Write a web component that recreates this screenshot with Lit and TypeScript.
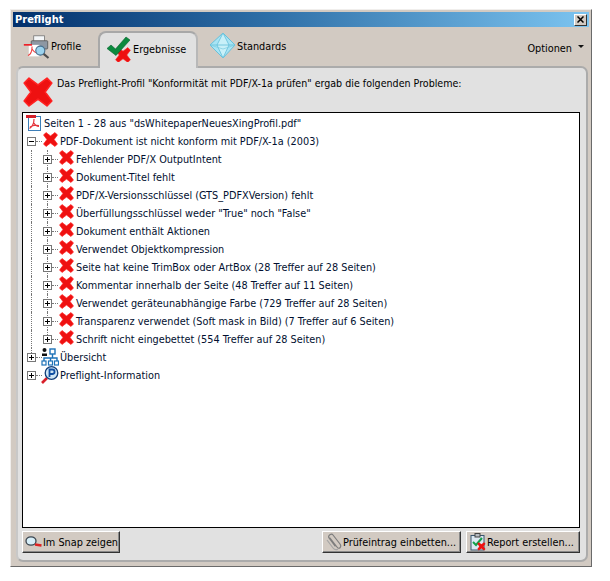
import { LitElement, html, css } from "lit";
import { customElement } from "lit/decorators.js";

const crossPath = "M3.2 0.6 L8 4.2 L12.8 0.6 L15.4 3.2 L11.8 8 L15.4 12.8 L12.8 15.4 L8 11.8 L3.2 15.4 L0.6 12.8 L4.2 8 L0.6 3.2 Z";
const cross = (size = 16) => html`<svg width=${size} height=${size} viewBox="0 0 16 16"><path d=${crossPath} fill="#ee1111" stroke="#f22" stroke-width=".8" stroke-linejoin="round"/></svg>`;

const profileIcon = html`<svg width="28" height="25" viewBox="0 0 34 30">
  <rect x="13" y="2" width="13" height="7" fill="#f4f6f8" stroke="#777"/>
  <rect x="10" y="8" width="20" height="10" rx="1" fill="#8d97a3" stroke="#555"/>
  <rect x="7" y="13" width="13" height="14" fill="#fff"/>
  <rect x="1" y="12" width="10" height="2" fill="#ee1c25"/>
  <path d="M11 15 C11 21 9 25 6 26 M11 18 C13 21 15 23 18 23" fill="none" stroke="#ee3a3a" stroke-width="1.3"/>
  <circle cx="21" cy="20" r="5.5" fill="#9cd3ee" stroke="#47708f" stroke-width="1.4"/>
  <path d="M25 24 L31 29" stroke="#4d4d4d" stroke-width="2.6"/>
</svg>`;

const checkIcon = html`<svg width="27" height="26" viewBox="0 0 27 26">
  <g transform="translate(9 11)"><path d=${crossPath} fill="#ee1111" stroke="#f22" stroke-width=".6"/></g>
  <path d="M1 12.5 L5 9 L9.5 13 L20 1 L24 4 L10 19.5 Z" fill="#0b8a3e" stroke="#05622c" stroke-width=".6"/>
</svg>`;

const diamondIcon = html`<svg width="28" height="28" viewBox="0 0 28 28">
  <path d="M14 1 L26 13 L14 26 L1 13 Z" fill="#a9e4f4" stroke="#66c2dc"/>
  <path d="M14 1 L8 13 L14 26 L20 13 Z M1 13 L26 13" fill="#c8f0f8" stroke="#63bed8" stroke-width=".8"/>
  <path d="M1 13 L14 17 L26 13" fill="none" stroke="#7accdf" stroke-width=".7"/>
</svg>`;

const pdfIcon = html`<svg width="16" height="16" viewBox="0 0 16 16">
  <rect x="2.5" y="1.5" width="12" height="14" fill="#fff" stroke="#3d7fb8"/>
  <rect x="0" y="0" width="10" height="3" fill="#d4202a"/>
  <path d="M8 4 C8 9 6 12 3.5 13.5 M8 8 C9 10 11 11.5 13 11.5 M4 12 C7 10 10 10 13 10.5" fill="none" stroke="#e5343a" stroke-width="1.2"/>
</svg>`;

const orgIcon = html`<svg width="18" height="18" viewBox="0 0 18 18">
  <circle cx="3.5" cy="2" r="2" fill="#111"/><path d="M1 8 V5.5 H6 V8 Z" fill="#111"/>
  <rect x="9" y="1" width="5" height="5" fill="#fff" stroke="#1d72b8" stroke-width="1.4"/>
  <path d="M11.5 6 V10 M3 13 V10 H16 V13 M9.5 10 V13" fill="none" stroke="#1d72b8" stroke-width="1.4"/>
  <rect x="1" y="13" width="4" height="4" fill="#fff" stroke="#1d72b8" stroke-width="1.2"/>
  <rect x="7.5" y="13" width="4" height="4" fill="#fff" stroke="#1d72b8" stroke-width="1.2"/>
  <rect x="13.5" y="13" width="4" height="4" fill="#fff" stroke="#1d72b8" stroke-width="1.2"/>
</svg>`;

const infoIcon = html`<svg width="18" height="18" viewBox="0 0 18 18">
  <path d="M1 17 L6 12" stroke="#d8202a" stroke-width="2.6"/>
  <circle cx="10.5" cy="7" r="6.3" fill="#cfe6f5" stroke="#123f7a" stroke-width="1.3"/>
  <path d="M8.5 11 V3.5 H11.3 A2.2 2.2 0 0 1 11.3 8 H8.5" fill="none" stroke="#0f4fa3" stroke-width="1.8"/>
</svg>`;

const snapIcon = html`<svg width="17" height="14" viewBox="0 0 17 14">
  <ellipse cx="6" cy="6" rx="5" ry="4.2" fill="#d6eef8" stroke="#3c4650" stroke-width="1.3"/>
  <path d="M10 9.5 L16.5 10.5" stroke="#d22" stroke-width="2.4"/>
</svg>`;

const clipIcon = html`<svg width="17" height="18" viewBox="0 0 17 18">
  <path d="M5 5 L12 14 C14 17 17 14 15 11 L8 2 C6.5 0 2.5 2.5 4 5 L10 13" fill="none" stroke="#7d7d7d" stroke-width="1.2" stroke-linecap="round"/>
  <path d="M2 7 L8 15 C9.5 17 11.5 17 13 16" fill="none" stroke="#a5a5a5" stroke-width="1.2"/>
</svg>`;

const reportIcon = html`<svg width="16" height="18" viewBox="0 0 16 18">
  <rect x="1" y="2.5" width="13" height="14.5" fill="#dce8f2" stroke="#39566f"/>
  <rect x="5" y="0.5" width="5" height="3.5" fill="#b6bcc2" stroke="#444"/>
  <path d="M3 9 L6 12 L12 5" fill="none" stroke="#13a04a" stroke-width="2"/>
  <g transform="translate(7 9) scale(.55)"><path d=${crossPath} fill="#e11"/></g>
</svg>`;

const items = [
  "Fehlender PDF/X OutputIntent",
  "Dokument-Titel fehlt",
  "PDF/X-Versionsschlüssel (GTS_PDFXVersion) fehlt",
  "Überfüllungsschlüssel weder \"True\" noch \"False\"",
  "Dokument enthält Aktionen",
  "Verwendet Objektkompression",
  "Seite hat keine TrimBox oder ArtBox (28 Treffer auf 28 Seiten)",
  "Kommentar innerhalb der Seite (48 Treffer auf 11 Seiten)",
  "Verwendet geräteunabhängige Farbe (729 Treffer auf 28 Seiten)",
  "Transparenz verwendet (Soft mask in Bild) (7 Treffer auf 6 Seiten)",
  "Schrift nicht eingebettet (554 Treffer auf 28 Seiten)",
];

@customElement("app-root")
export class AppRoot extends LitElement {
  static styles = css`
    :host { display: block; width: 610px; height: 581px; background: #fff; font-family: "DejaVu Sans Condensed", "DejaVu Sans", sans-serif; font-stretch: condensed; font-size: 10.8px; color: #000; padding: 9px 0 0 10px; box-sizing: border-box; overflow: hidden; }
    .window { width: 582px; height: 558px; box-sizing: border-box; background: #d2cac2; border: 1px solid; border-color: #f0eeec #6a6a6a #6a6a6a #f0eeec; padding: 2px 2px 0 2px; display: flex; flex-direction: column; }
    .title { height: 15px; flex: none; background: linear-gradient(90deg, #02306c 0%, #2f70a8 45%, #7cc4f0 100%); display: flex; align-items: center; justify-content: space-between; padding: 0 2px 0 2px; color: #fff; font-weight: bold; font-size: 11px; }
    .close { width: 13px; height: 12px; box-sizing: border-box; background: #d2cac2; border: 1px solid; border-color: #fff #333 #333 #fff; display: flex; align-items: center; justify-content: center; }
    .tabs { height: 39px; flex: none; display: flex; align-items: flex-end; padding: 0 0 0 3px; position: relative; }
    .tab { height: 37px; display: flex; align-items: center; box-sizing: border-box; padding-bottom: 3px; }
    .tab svg { flex: none; }
    .tab.p { width: 82px; padding-left: 7px; }
    .tab.e { width: 100px; margin-right: 11px; padding-left: 6px; background: #e1e1e1; border: 2px solid #a8a8a8; border-bottom: none; border-radius: 8px 8px 0 0; border-right-color: #b8b8b8; position: relative; top: 2px; z-index: 1; }
    .opt { margin-left: auto; height: 37px; display: flex; align-items: center; gap: 6px; padding-right: 5px; padding-top: 2px; box-sizing: border-box; }
    .caret { width: 0; height: 0; border: 3px solid transparent; border-top: 3px solid #111; position: relative; top: -1px; }
    .panel { flex: 1; margin: 0 1px 4px 3px; background: #e1e1e1; border: 2px solid #ababab; border-radius: 7px; border-left-color: #c8c8c8; display: flex; flex-direction: column; padding: 0 6px 7px 4px; box-sizing: border-box; }
    .head { height: 44px; flex: none; display: flex; gap: 4px; padding: 9px 0 0 1px; box-sizing: border-box; font-size: 10.6px; }
    .tree { flex: 1; background: #fff; border: 1px solid #000; padding-top: 1px; min-height: 0; color: #021030; }
    .row { height: 18px; display: flex; align-items: center; white-space: nowrap; }
    .cell { width: 16px; height: 18px; flex: none; position: relative; display: flex; align-items: center; justify-content: center; }
    .cell.guide::before { content: ""; position: absolute; left: 8px; top: 0; bottom: 0; border-left: 1px dotted #777; }
    .cell.guide.end::before { bottom: 9px; }
    .cell.exp::after { content: ""; position: absolute; left: 13px; width: 6px; top: 9px; border-top: 1px dotted #777; }
    .box { width: 9px; height: 9px; box-sizing: border-box; border: 1px solid #777; background: #fff; position: relative; z-index: 1; display: block; }
    .box::before { content: ""; position: absolute; left: 1px; right: 1px; top: 3px; height: 1px; background: #000; }
    .box.plus::after { content: ""; position: absolute; top: 1px; bottom: 1px; left: 3px; width: 1px; background: #000; }
    .ic { margin: 0 2px 3px 4px; flex: none; display: flex; }
    .ic2 { margin-left: 2px; margin-right: 1px; flex: none; display: flex; }
    .rootic { margin-left: 3px; margin-right: 2px; flex: none; display: flex; }
    .foot { height: 25px; flex: none; display: flex; align-items: flex-end; gap: 5px; }
    .btn { height: 22px; box-sizing: border-box; background: #d2cac2; border: 1px solid; border-color: #fff #333 #333 #fff; display: flex; align-items: center; gap: 1px; padding: 0 0 0 3px; font: inherit; color: #000; white-space: nowrap; box-shadow: inset -1px -1px 0 #888; }
    .btn svg { flex: none; }
    .btn.first { margin-right: auto; width: 98px; padding-left: 2px; }
    .btn.clip { width: 139px; padding-left: 2px; }
    .btn.rep { width: 114px; }
  `;

  render() {
    return html`<div class="window">
      <div class="title"><span>Preflight</span>
        <span class="close"><svg width="7" height="7" viewBox="0 0 7 7"><path d="M0.5 0.5 L6.5 6.5 M6.5 0.5 L0.5 6.5" stroke="#000" stroke-width="1.5"/></svg></span>
      </div>
      <div class="tabs">
        <div class="tab p">${profileIcon}<span>Profile</span></div>
        <div class="tab e">${checkIcon}<span>Ergebnisse</span></div>
        <div class="tab s">${diamondIcon}<span>Standards</span></div>
        <div class="opt"><span>Optionen</span><span class="caret"></span></div>
      </div>
      <div class="panel">
        <div class="head">${cross(30)}<span>Das Preflight-Profil "Konformität mit PDF/X-1a prüfen" ergab die folgenden Probleme:</span></div>
        <div class="tree">
          <div class="row"><span class="rootic">${pdfIcon}</span><span>Seiten 1 - 28 aus "dsWhitepaperNeuesXingProfil.pdf"</span></div>
          <div class="row"><span class="cell exp"><span class="box"></span></span><span class="ic">${cross(15)}</span><span>PDF-Dokument ist nicht konform mit PDF/X-1a (2003)</span></div>
          ${items.map((t, i) => html`<div class="row"><span class="cell guide"></span><span class="cell exp guide ${i === items.length - 1 ? "end" : ""}"><span class="box plus"></span></span><span class="ic">${cross(15)}</span><span>${t}</span></div>`)}
          <div class="row"><span class="cell exp guide end"><span class="box plus"></span></span><span class="ic2">${orgIcon}</span><span>Übersicht</span></div>
          <div class="row"><span class="cell exp"><span class="box plus"></span></span><span class="ic2">${infoIcon}</span><span>Preflight-Information</span></div>
        </div>
        <div class="foot">
          <button class="btn first">${snapIcon}<span>Im Snap zeigen</span></button>
          <button class="btn clip">${clipIcon}<span>Prüfeintrag einbetten...</span></button>
          <button class="btn rep">${reportIcon}<span>Report erstellen...</span></button>
        </div>
      </div>
    </div>`;
  }
}
